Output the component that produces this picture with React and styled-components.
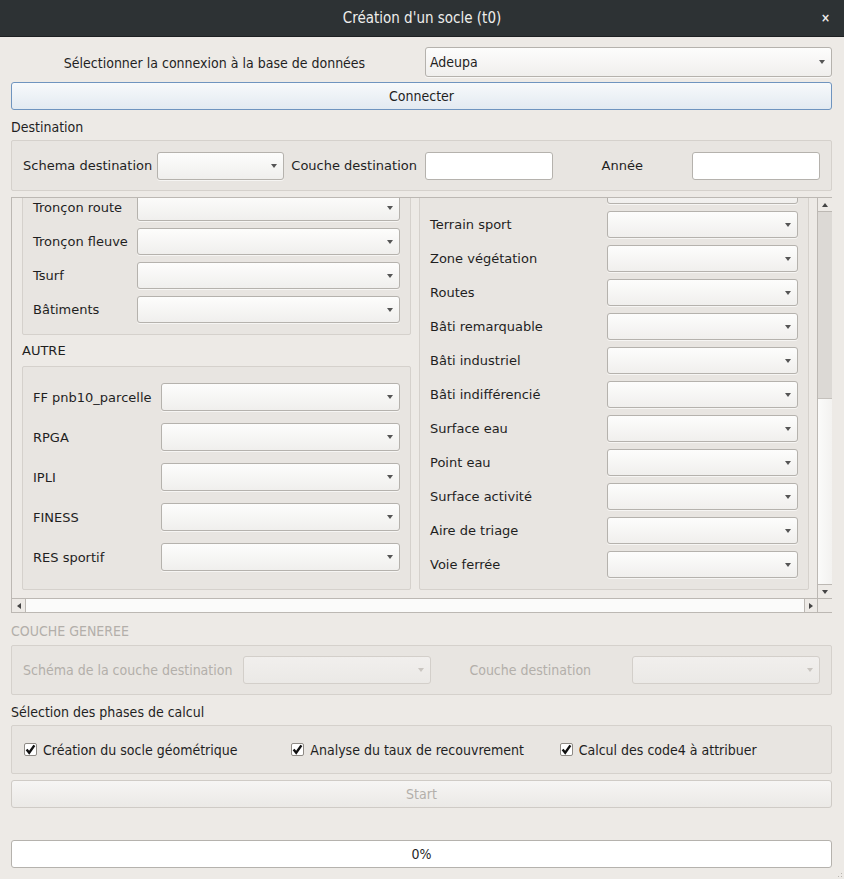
import React from "react";
import styled, { createGlobalStyle, css } from "styled-components";

const COND = `"DejaVu Sans Condensed", "DejaVu Sans", sans-serif`;
const NORM = `"DejaVu Sans", sans-serif`;

const GlobalStyle = createGlobalStyle`
  html, body { margin: 0; padding: 0; background: #edeae6; }
  body { font-family: ${NORM}; color: #1f1f1f; }
  * { box-sizing: border-box; }
`;

const Window = styled.div`
  position: relative;
  width: 844px;
  height: 879px;
  background: #edeae6;
  display: flex;
  flex-direction: column;
  overflow: hidden;
`;

const TitleBar = styled.div`
  height: 37px;
  flex: none;
  background: #2d3234;
  border-bottom: 1px solid #1d2022;
  display: grid;
  grid-template-columns: 60px 1fr 60px;
  align-items: center;
  color: #eeeeec;
  font-family: ${COND};
  font-stretch: condensed;
  font-size: 15px;
`;

const Title = styled.div`
  text-align: center;
`;

const Close = styled.div`
  text-align: right;
  padding-right: 14px;
  font-family: ${NORM};
  font-size: 12px;
  font-weight: bold;
`;

const Body = styled.div`
  display: flex;
  flex-direction: column;
  padding: 0 12px 0 11px;
`;

const ConnRow = styled.div`
  margin-top: 10px;
  height: 30px;
  display: grid;
  grid-template-columns: 1fr 1fr;
  column-gap: 7px;
  align-items: center;
`;

const CondText = styled.span`
  font-family: ${COND};
  font-stretch: condensed;
  font-size: 14px;
  color: ${(p) => (p.$disabled ? "#b3afaa" : "#1f1f1f")};
  white-space: nowrap;
`;

const CenterCell = styled.div`
  text-align: center;
`;

const Label = styled.div`
  font-family: ${NORM};
  font-size: 13px;
  color: #1f1f1f;
  white-space: nowrap;
`;

const ComboBox = styled.div`
  position: relative;
  height: ${(p) => p.$h || 28}px;
  width: ${(p) => (p.$w ? `${p.$w}px` : "auto")};
  border: 1px solid ${(p) => (p.$disabled ? "#d3cfca" : "#b5b2ad")};
  border-radius: 3px;
  background: ${(p) =>
    p.$disabled
      ? "linear-gradient(#f1efed, #ebe9e6)"
      : "linear-gradient(#fdfdfc, #f0efed)"};
  display: flex;
  align-items: center;
  padding-left: 4px;
  box-shadow: ${(p) => (p.$disabled ? "none" : "0 1px 0 rgba(255,255,255,0.6)")};
`;

const Arrow = styled.span`
  position: absolute;
  width: 0;
  height: 0;
  ${(p) =>
    p.$dir === "down" &&
    css`
      border-left: 3.5px solid transparent;
      border-right: 3.5px solid transparent;
      border-top: 4px solid ${p.$c || "#555"};
    `}
  ${(p) =>
    p.$dir === "up" &&
    css`
      border-left: 3.5px solid transparent;
      border-right: 3.5px solid transparent;
      border-bottom: 4px solid ${p.$c || "#555"};
    `}
  ${(p) =>
    p.$dir === "left" &&
    css`
      border-top: 3.5px solid transparent;
      border-bottom: 3.5px solid transparent;
      border-right: 4px solid ${p.$c || "#555"};
    `}
  ${(p) =>
    p.$dir === "right" &&
    css`
      border-top: 3.5px solid transparent;
      border-bottom: 3.5px solid transparent;
      border-left: 4px solid ${p.$c || "#555"};
    `}
`;

const ComboArrow = styled(Arrow)`
  right: 6px;
  top: 50%;
  margin-top: -2px;
`;

function Combo({ value, w, h, disabled }) {
  return (
    <ComboBox $w={w} $h={h} $disabled={disabled}>
      {value ? <CondText>{value}</CondText> : null}
      <ComboArrow $dir="down" $c={disabled ? "#c9c5c0" : "#555"} />
    </ComboBox>
  );
}

const LineEdit = styled.div`
  width: ${(p) => p.$w}px;
  height: 28px;
  background: #fff;
  border: 1px solid #b5b2ad;
  border-radius: 3px;
`;

const PushButton = styled.div`
  height: 28px;
  border-radius: 3px;
  display: flex;
  align-items: center;
  justify-content: center;
  ${(p) =>
    p.$primary
      ? css`
          border: 1px solid #6f94bf;
          background: linear-gradient(#f7f9fb, #e3eaf1);
        `
      : css`
          border: 1px solid #cfcbc6;
          background: linear-gradient(#f6f5f4, #ebe9e6);
        `}
`;

const SectionTitle = styled.div`
  height: ${(p) => p.$h}px;
  padding-top: ${(p) => p.$pt}px;
  line-height: 16px;
`;

const GroupBox = styled.div`
  border: 1px solid #d5d1cc;
  border-radius: 2px;
  background: #e8e5e1;
`;

const DestGroup = styled(GroupBox)`
  height: 51px;
  display: flex;
  align-items: center;
  padding: 0 11px 0 11px;
`;

const FixedLabel = styled(Label)`
  width: ${(p) => p.$w}px;
  margin-left: ${(p) => p.$ml || 0}px;
  margin-right: ${(p) => p.$mr || 0}px;
`;

const ScrollArea = styled.div`
  margin-top: 6px;
  height: 416px;
  border: 1px solid #bcb8b3;
  display: grid;
  grid-template-columns: 805px 15px;
  grid-template-rows: 400px 14px;
`;

const Viewport = styled.div`
  overflow: hidden;
  display: flex;
  flex-direction: column;
  justify-content: flex-end;
`;

const Columns = styled.div`
  display: grid;
  grid-template-columns: 389px 390px;
  column-gap: 8px;
  align-items: end;
  padding: 0 8px 8px 10px;
`;

const Column = styled.div`
  display: flex;
  flex-direction: column;
`;

const FormGroup = styled(GroupBox)`
  display: grid;
  grid-template-columns: ${(p) => p.$lw}px 1fr;
  row-gap: ${(p) => p.$gap}px;
  align-items: center;
  padding: ${(p) => p.$pt}px 10px ${(p) => p.$pb}px 10px;
`;

const VBar = styled.div`
  border-left: 1px solid #bcb8b3;
  display: flex;
  flex-direction: column;
  background: #dcd9d5;
`;

const HBar = styled.div`
  border-top: 1px solid #bcb8b3;
  display: flex;
  background: #dcd9d5;
`;

const BarButton = styled.div`
  position: relative;
  flex: none;
  background: #edeae6;
  display: flex;
  align-items: center;
  justify-content: center;
  ${(p) =>
    p.$vertical
      ? css`
          height: ${p.$size}px;
          border-${p.$edge}: 1px solid #bcb8b3;
        `
      : css`
          width: ${p.$size}px;
          border-${p.$edge}: 1px solid #bcb8b3;
        `}
`;

const Track = styled.div`
  flex: 1;
  display: flex;
  flex-direction: ${(p) => (p.$vertical ? "column" : "row")};
  justify-content: flex-end;
`;

const Thumb = styled.div`
  background: linear-gradient(to right, #fbfbfa, #f3f2f0);
  ${(p) =>
    p.$vertical
      ? css`
          height: ${p.$size}px;
          border-top: 1px solid #c5c1bc;
        `
      : css`
          flex: 1;
          background: #fbfbfa;
        `}
`;

const Corner = styled.div`
  border-top: 1px solid #bcb8b3;
  border-left: 1px solid #bcb8b3;
  background: #edeae6;
`;

const DisabledGroup = styled(GroupBox)`
  height: 50px;
  display: flex;
  align-items: center;
  padding: 0 11px;
`;

const CheckGroup = styled(GroupBox)`
  height: 49px;
  display: flex;
  align-items: center;
  padding: 0 12px;
`;

const CheckItem = styled.div`
  display: flex;
  align-items: center;
  width: ${(p) => p.$w}px;
  gap: 6px;
`;

const CheckBoxBox = styled.span`
  width: 13px;
  height: 13px;
  border: 1px solid #8e8a85;
  border-radius: 2px;
  background: #fff;
  display: flex;
  align-items: center;
  justify-content: center;
  flex: none;
`;

function Check({ label, w }) {
  return (
    <CheckItem $w={w}>
      <CheckBoxBox>
        <svg width="11" height="11" viewBox="0 0 11 11">
          <path d="M1.6 5.6 L4.2 8.8 L9.4 1.4" fill="none" stroke="#111" strokeWidth="2.4" strokeLinejoin="miter" />
        </svg>
      </CheckBoxBox>
      <CondText>{label}</CondText>
    </CheckItem>
  );
}

const Progress = styled.div`
  margin-top: 32px;
  height: 28px;
  background: #fff;
  border: 1px solid #b5b2ad;
  border-radius: 3px;
  display: flex;
  align-items: center;
  justify-content: center;
`;

const Grip = styled.div`
  position: absolute;
  right: 1px;
  bottom: 2px;
  width: 8px;
  height: 10px;
`;

const leftTop = ["Tronçon route", "Tronçon fleuve", "Tsurf", "Bâtiments"];
const autre = ["FF pnb10_parcelle", "RPGA", "IPLI", "FINESS", "RES sportif"];
const right = [
  "",
  "Terrain sport",
  "Zone végétation",
  "Routes",
  "Bâti remarquable",
  "Bâti industriel",
  "Bâti indifférencié",
  "Surface eau",
  "Point eau",
  "Surface activité",
  "Aire de triage",
  "Voie ferrée",
];

export default function App() {
  return (
    <>
      <GlobalStyle />
      <Window>
        <TitleBar>
          <div />
          <Title>Création d'un socle (t0)</Title>
          <Close>×</Close>
        </TitleBar>
        <Body>
          <ConnRow>
            <CenterCell>
              <CondText>Sélectionner la connexion à la base de données</CondText>
            </CenterCell>
            <Combo value="Adeupa" h={30} />
          </ConnRow>
          <PushButton $primary style={{ marginTop: 5 }}>
            <CondText>Connecter</CondText>
          </PushButton>
          <SectionTitle $h={30} $pt={9}>
            <CondText>Destination</CondText>
          </SectionTitle>
          <DestGroup>
            <FixedLabel $w={134}>Schema destination</FixedLabel>
            <Combo w={128} />
            <FixedLabel $w={134} $ml={7}>Couche destination</FixedLabel>
            <LineEdit $w={128} />
            <FixedLabel $w={91} $ml={49}>Année</FixedLabel>
            <LineEdit $w={128} />
          </DestGroup>

          <ScrollArea>
            <Viewport>
              <Columns>
                <Column>
                  <FormGroup $lw={104} $gap={7} $pt={10} $pb={11}>
                    {leftTop.map((l) => (
                      <React.Fragment key={l}>
                        <Label>{l}</Label>
                        <Combo h={27} />
                      </React.Fragment>
                    ))}
                  </FormGroup>
                  <SectionTitle $h={31} $pt={8}>
                    <Label>AUTRE</Label>
                  </SectionTitle>
                  <FormGroup $lw={128} $gap={12} $pt={16} $pb={18}>
                    {autre.map((l) => (
                      <React.Fragment key={l}>
                        <Label>{l}</Label>
                        <Combo h={28} />
                      </React.Fragment>
                    ))}
                  </FormGroup>
                </Column>
                <Column>
                  <FormGroup $lw={177} $gap={7} $pt={10} $pb={11}>
                    {right.map((l, i) => (
                      <React.Fragment key={i}>
                        <Label>{l}</Label>
                        <Combo h={27} />
                      </React.Fragment>
                    ))}
                  </FormGroup>
                </Column>
              </Columns>
            </Viewport>
            <VBar>
              <BarButton $vertical $size={14} $edge="bottom">
                <Arrow $dir="up" $c="#444" />
              </BarButton>
              <Track $vertical>
                <Thumb $vertical $size={186} />
              </Track>
              <BarButton $vertical $size={14} $edge="top">
                <Arrow $dir="down" $c="#444" />
              </BarButton>
            </VBar>
            <HBar>
              <BarButton $size={14} $edge="right">
                <Arrow $dir="left" $c="#444" />
              </BarButton>
              <Track>
                <Thumb />
              </Track>
              <BarButton $size={13} $edge="left">
                <Arrow $dir="right" $c="#444" />
              </BarButton>
            </HBar>
            <Corner />
          </ScrollArea>

          <SectionTitle $h={32} $pt={10}>
            <CondText $disabled>COUCHE GENEREE</CondText>
          </SectionTitle>
          <DisabledGroup>
            <FixedLabel $w={221} as="div">
              <CondText $disabled>Schéma de la couche destination</CondText>
            </FixedLabel>
            <Combo w={189} disabled />
            <FixedLabel $w={163} $ml={38} as="div">
              <CondText $disabled>Couche destination</CondText>
            </FixedLabel>
            <Combo w={189} disabled />
          </DisabledGroup>

          <SectionTitle $h={30} $pt={9}>
            <CondText>Sélection des phases de calcul</CondText>
          </SectionTitle>
          <CheckGroup>
            <Check w={268} label="Création du socle géométrique" />
            <Check w={269} label="Analyse du taux de recouvrement" />
            <Check w={260} label="Calcul des code4 à attribuer" />
          </CheckGroup>

          <PushButton style={{ marginTop: 6 }}>
            <CondText $disabled>Start</CondText>
          </PushButton>

          <Progress>
            <CondText>0%</CondText>
          </Progress>
        </Body>
        <Grip>
          <svg width="8" height="10" viewBox="0 0 8 10">
            {[[6, 1], [6, 4], [3, 4], [6, 7], [3, 7], [0, 7]].map(([x, y], i) => (
              <rect key={i} x={x} y={y} width="1" height="1" fill="#b9b5b0" />
            ))}
          </svg>
        </Grip>
      </Window>
    </>
  );
}
